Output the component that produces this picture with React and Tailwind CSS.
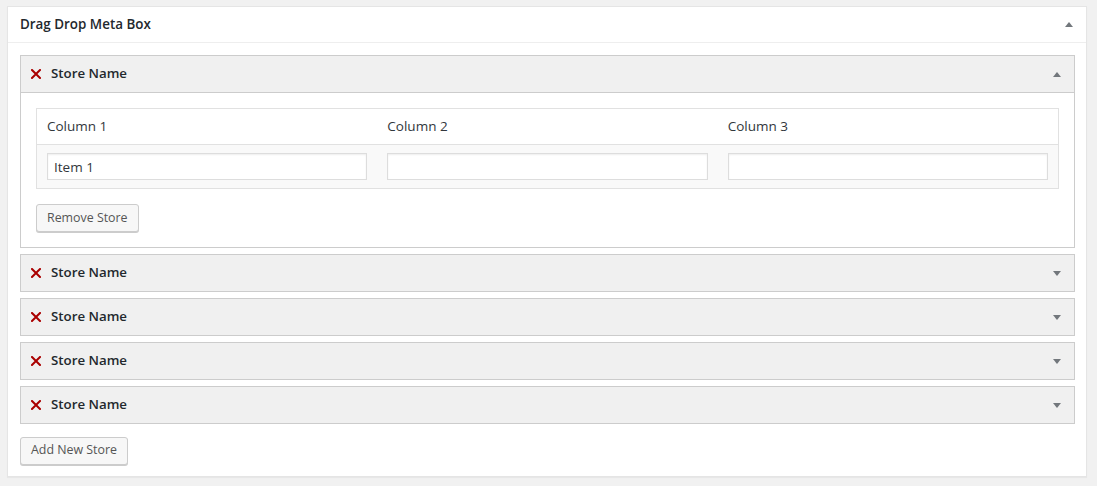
import React from 'react';

const font = { fontFamily: '"Open Sans", "Noto Sans", "Liberation Sans", sans-serif' };

const RemoveIcon = () => (
    <svg width="10" height="10" viewBox="0 0 10 10" className="shrink-0">
        <path d="M1 1 L9 9 M9 1 L1 9" stroke="#aa0000" strokeWidth="2" strokeLinecap="square" />
    </svg>
);

const Arrow = ({ up }) => (
    <svg width="8" height="5" viewBox="0 0 8 5" className="shrink-0">
        {up ? <path d="M4 0 L8 5 L0 5 Z" fill="#72777c" /> : <path d="M0 0 L8 0 L4 5 Z" fill="#72777c" />}
    </svg>
);

const StoreHeader = ({ open }) => (
    <div className="h-[36px] flex items-center pl-[10px] pr-[13px] bg-[#f0f0f0]">
        <RemoveIcon />
        <span className="ml-[10px] text-[13.3px] font-semibold text-[#23282d] flex-1">Store Name</span>
        <Arrow up={open} />
    </div>
);

const Button = ({ children }) => (
    <button className="h-[28px] px-[10px] text-[12.4px] text-[#555] bg-[#f7f7f7] border border-[#cccccc] rounded-[3px] shadow-[0_1px_0_#cccccc]">
        {children}
    </button>
);

const App = () => {
    const columns = ['Column 1', 'Column 2', 'Column 3'];
    const values = ['Item 1', '', ''];

    return (
        <div className="min-h-[486px] bg-[#f1f1f1] pt-[6px] pl-[7px] pr-[10px]" style={font}>
            <div className="bg-white border border-[#e5e5e5] shadow-[0_1px_1px_rgba(0,0,0,0.04)]">
                <div className="h-[36px] flex items-center justify-between pl-[12px] pr-[13px] border-b border-[#eeeeee]">
                    <h2 className="text-[13.4px] font-semibold text-[#23282d]">Drag Drop Meta Box</h2>
                    <Arrow up />
                </div>
                <div className="pt-[12px] pb-[11px] pl-[12px] pr-[11px]">
                    <div className="flex flex-col gap-[6px]">
                        {/* open store */}
                        <div className="border border-[#cccccc]">
                            <div className="border-b border-[#cccccc]">
                                <StoreHeader open />
                            </div>
                            <div className="bg-white p-[15px]">
                                <div className="border border-[#e1e1e1]">
                                    <div className="grid grid-cols-3 h-[36px] items-center bg-white border-b border-[#e1e1e1]">
                                        {columns.map((c) => (
                                            <div key={c} className="px-[10px] text-[13.5px] text-[#32373c]">{c}</div>
                                        ))}
                                    </div>
                                    <div className="grid grid-cols-3 bg-[#f9f9f9] py-[8px]">
                                        {values.map((v, i) => (
                                            <div key={i} className="px-[10px]">
                                                <input
                                                    defaultValue={v}
                                                    className="w-full h-[27px] px-[6px] text-[13.5px] text-[#32373c] bg-white border border-[#dddddd] shadow-[inset_0_1px_2px_rgba(0,0,0,0.07)] outline-none"
                                                    style={font}
                                                />
                                            </div>
                                        ))}
                                    </div>
                                </div>
                                <div className="mt-[15px]">
                                    <Button>Remove Store</Button>
                                </div>
                            </div>
                        </div>
                        {[1, 2, 3, 4].map((n) => (
                            <div key={n} className="border border-[#cccccc]">
                                <StoreHeader />
                            </div>
                        ))}
                    </div>
                    <div className="mt-[12px]">
                        <Button>Add New Store</Button>
                    </div>
                </div>
            </div>
        </div>
    );
};

export default App;
